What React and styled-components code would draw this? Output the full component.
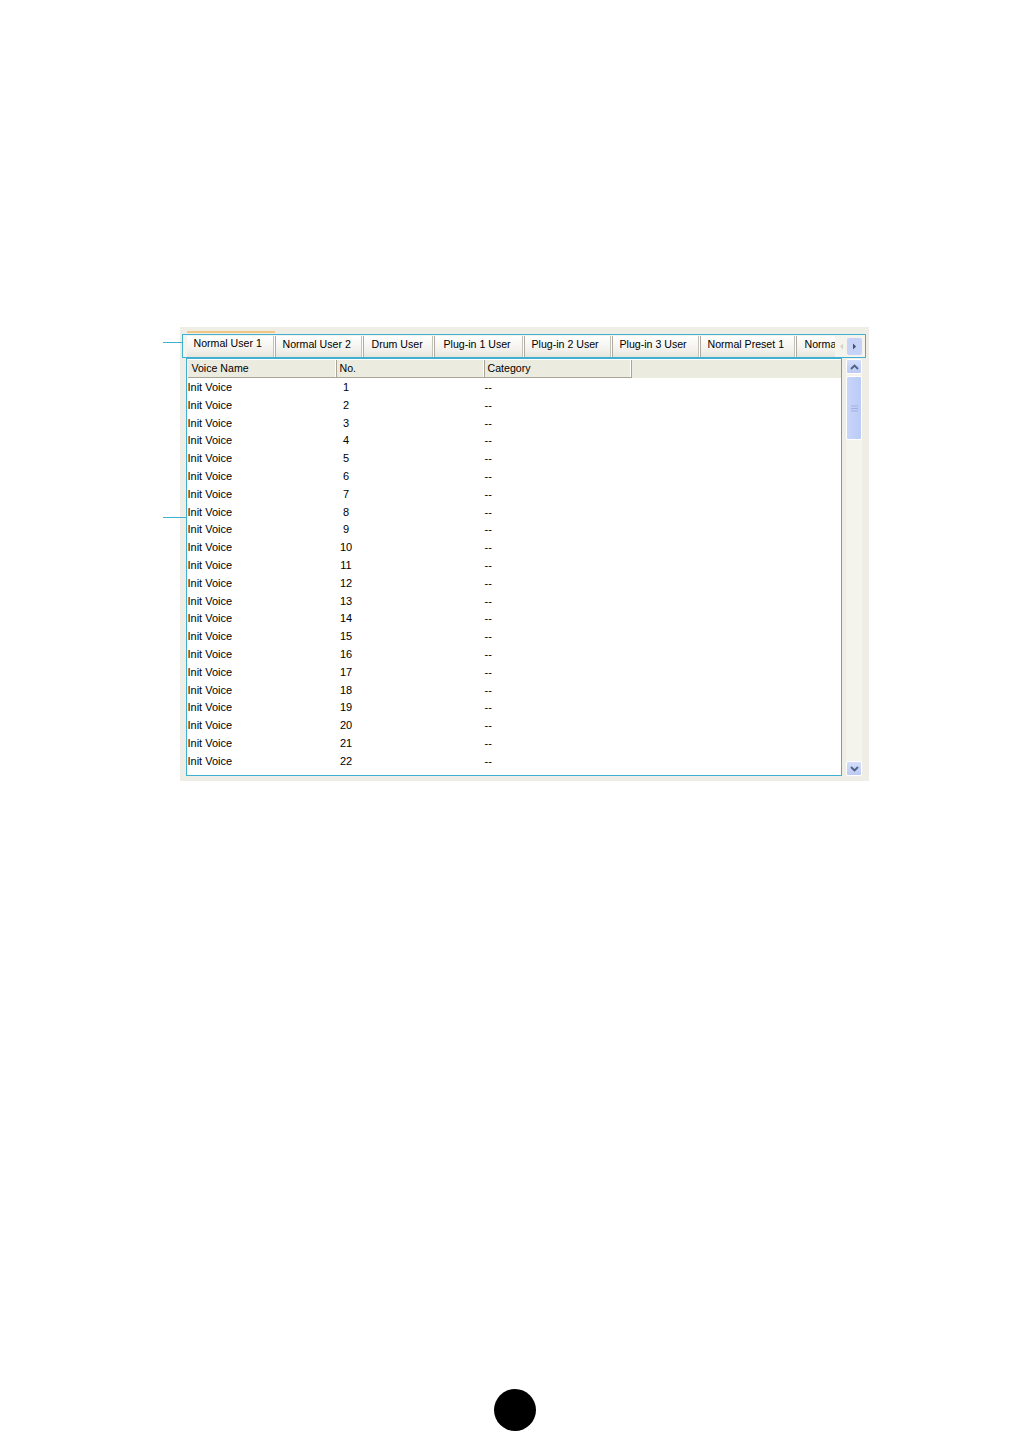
import React from "react";
import styled, { createGlobalStyle } from "styled-components";

const Global = createGlobalStyle`
  html, body { margin: 0; padding: 0; background: #ffffff; }
  body { font-family: "Liberation Sans", Arial, sans-serif; }
`;

const CYAN = "#3fb0cf";

const Page = styled.div`
  width: 1032px;
  height: 1456px;
  box-sizing: border-box;
  padding: 327px 0 0 180px;
  display: flex;
  flex-direction: column;
  background: #fff;
`;

const Window = styled.div`
  position: relative;
  width: 689px;
  height: 454px;
  box-sizing: border-box;
  background: #efeee6;
  padding-top: 7px;
  display: flex;
  flex-direction: column;
`;

const Callout = styled.div`
  position: absolute;
  left: -17px;
  top: ${(p) => p.$top}px;
  width: ${(p) => p.$w}px;
  height: 1px;
  background: ${CYAN};
`;

const TabStrip = styled.div`
  margin-left: 2px;
  width: 684px;
  height: 24px;
  box-sizing: border-box;
  border: 1.5px solid ${CYAN};
  display: flex;
  align-items: stretch;
  padding-left: 3.5px;
  overflow: hidden;
  position: relative;
  background: #f4f3ee;
`;

const Tab = styled.div`
  flex: none;
  width: ${(p) => p.$w}px;
  box-sizing: border-box;
  padding-left: ${(p) => p.$pl}px;
  padding-top: ${(p) => (p.$active ? 0 : 1)}px;
  font-size: 10.6px;
  color: #000;
  white-space: nowrap;
  overflow: hidden;
  line-height: 14px;
  background: linear-gradient(#ffffff, #f1f0ea 70%, #e6e5dd);
  border-right: 1px solid #aeaca2;
  box-shadow: inset -1px 0 0 #ffffff, inset -2px 0 0 #c4c2b8;
  margin-top: 1px;
`;

const ActiveMark = styled.div`
  position: absolute;
  left: 7px;
  top: 4px;
  width: 88px;
  height: 2px;
  background: #f3c585;
`;

const ArrowBox = styled.div`
  position: absolute;
  right: 0;
  top: 0;
  bottom: 0;
  width: 30px;
  box-sizing: border-box;
  padding: 1px 1px 0 2px;
  display: flex;
  gap: 2px;
  align-items: center;
  background: #f4f3ee;
`;

const ArrowBtn = styled.div`
  flex: none;
  width: ${(p) => p.$w}px;
  height: 17px;
  display: flex;
  align-items: center;
  justify-content: center;
  background: ${(p) => (p.$on ? "#c6d3f7" : "transparent")};
  border-radius: 2px;
`;

const Body = styled.div`
  display: flex;
  margin-left: 6px;
  gap: 4px;
`;

const TableBox = styled.div`
  width: 656px;
  height: 418px;
  box-sizing: border-box;
  border: 1.5px solid ${CYAN};
  background: #ffffff;
  overflow: hidden;
  padding-left: 0.5px;
`;

const HeaderRow = styled.div`
  display: flex;
  height: 18.5px;
  background: #ecebdf;
  margin-top: 0.5px;
`;

const HeadCell = styled.div`
  flex: none;
  width: ${(p) => p.$w}px;
  box-sizing: border-box;
  padding-left: ${(p) => p.$pl}px;
  font-size: 10.6px;
  line-height: 16px;
  color: #000;
  border-right: 1px solid #a8a596;
  border-bottom: 1px solid #a8a596;
  box-shadow: inset -1px 0 0 #ffffff;
`;

const RowList = styled.div`
  padding-top: 1px;
`;

const Row = styled.div`
  display: flex;
  height: 17.8px;
  font-size: 11px;
  line-height: 17.8px;
  color: #000;
  white-space: nowrap;
`;

const Cell = styled.div`
  flex: none;
  width: ${(p) => p.$w}px;
  box-sizing: border-box;
  padding-left: ${(p) => p.$pl}px;
`;

const Num = styled.span`
  display: inline-block;
  width: 13px;
  text-align: center;
`;

const Scrollbar = styled.div`
  width: 16px;
  height: 417px;
  margin-top: 1px;
  background: #f4f3ec;
  display: flex;
  flex-direction: column;
  justify-content: space-between;
  box-sizing: border-box;
`;

const ScrollTop = styled.div`
  display: flex;
  flex-direction: column;
  gap: 2px;
`;

const ScrollBtn = styled.div`
  width: 16px;
  height: 15px;
  box-sizing: border-box;
  background: linear-gradient(#d4defb, #bccbf4);
  border: 1px solid #ffffff;
  border-radius: 2px;
  display: flex;
  align-items: center;
  justify-content: center;
`;

const Thumb = styled.div`
  width: 16px;
  height: 64px;
  box-sizing: border-box;
  background: linear-gradient(90deg, #c8d6fb, #bccbf6);
  border: 1px solid #ffffff;
  border-radius: 2px;
  display: flex;
  align-items: center;
  justify-content: center;
`;

const Dot = styled.div`
  width: 42px;
  height: 42px;
  border-radius: 50%;
  background: #000;
  align-self: flex-start;
  margin-left: 314px;
  margin-top: 608px;
`;

const tabs = [
  ["Normal User 1", 89, 7, true],
  ["Normal User 2", 88, 7],
  ["Drum User", 71, 8],
  ["Plug-in 1 User", 90, 9],
  ["Plug-in 2 User", 88, 7],
  ["Plug-in 3 User", 88, 7],
  ["Normal Preset 1", 96, 7],
  ["Normal Preset 2", 96, 8],
];

const Chevron = ({ up }) => (
  <svg width="9" height="6" viewBox="0 0 9 6">
    <path
      d={up ? "M1 5 L4.5 1.5 L8 5" : "M1 1 L4.5 4.5 L8 1"}
      fill="none"
      stroke="#4d6185"
      strokeWidth="1.8"
    />
  </svg>
);

export default function App() {
  const rows = Array.from({ length: 24 }, (_, i) => i + 1);
  return (
    <>
      <Global />
      <Page>
        <Window>
          <Callout $top={15} $w={19} />
          <Callout $top={190} $w={23} />
          <TabStrip>
            {tabs.map(([t, w, pl, a]) => (
              <Tab key={t} $w={w} $pl={pl} $active={a}>
                {t}
              </Tab>
            ))}
            <ArrowBox>
              <ArrowBtn $w={8}>
                <svg width="5" height="7" viewBox="0 0 5 7">
                  <path d="M4 0.5 L1 3.5 L4 6.5 Z" fill="#d4d2c8" />
                </svg>
              </ArrowBtn>
              <ArrowBtn $w={15} $on>
                <svg width="5" height="7" viewBox="0 0 5 7">
                  <path d="M1 0.5 L4 3.5 L1 6.5 Z" fill="#3a4f7a" />
                </svg>
              </ArrowBtn>
            </ArrowBox>
          </TabStrip>
          <ActiveMark />
          <Body>
            <TableBox>
              <HeaderRow>
                <HeadCell $w={149} $pl={4}>Voice Name</HeadCell>
                <HeadCell $w={148} $pl={3}>No.</HeadCell>
                <HeadCell $w={147} $pl={3}>Category</HeadCell>
              </HeaderRow>
              <RowList>
                {rows.map((n) => (
                  <Row key={n}>
                    <Cell $w={149} $pl={0}>Init Voice</Cell>
                    <Cell $w={148} $pl={3}>
                      <Num>{n}</Num>
                    </Cell>
                    <Cell $w={147} $pl={0}>--</Cell>
                  </Row>
                ))}
              </RowList>
            </TableBox>
            <Scrollbar>
              <ScrollTop>
                <ScrollBtn>
                  <Chevron up />
                </ScrollBtn>
                <Thumb>
                  <svg width="7" height="7" viewBox="0 0 7 7">
                    <path d="M0 1 H7 M0 3.5 H7 M0 6 H7" stroke="#9fb1e4" strokeWidth="1" />
                  </svg>
                </Thumb>
              </ScrollTop>
              <ScrollBtn>
                <Chevron />
              </ScrollBtn>
            </Scrollbar>
          </Body>
        </Window>
        <Dot />
      </Page>
    </>
  );
}
